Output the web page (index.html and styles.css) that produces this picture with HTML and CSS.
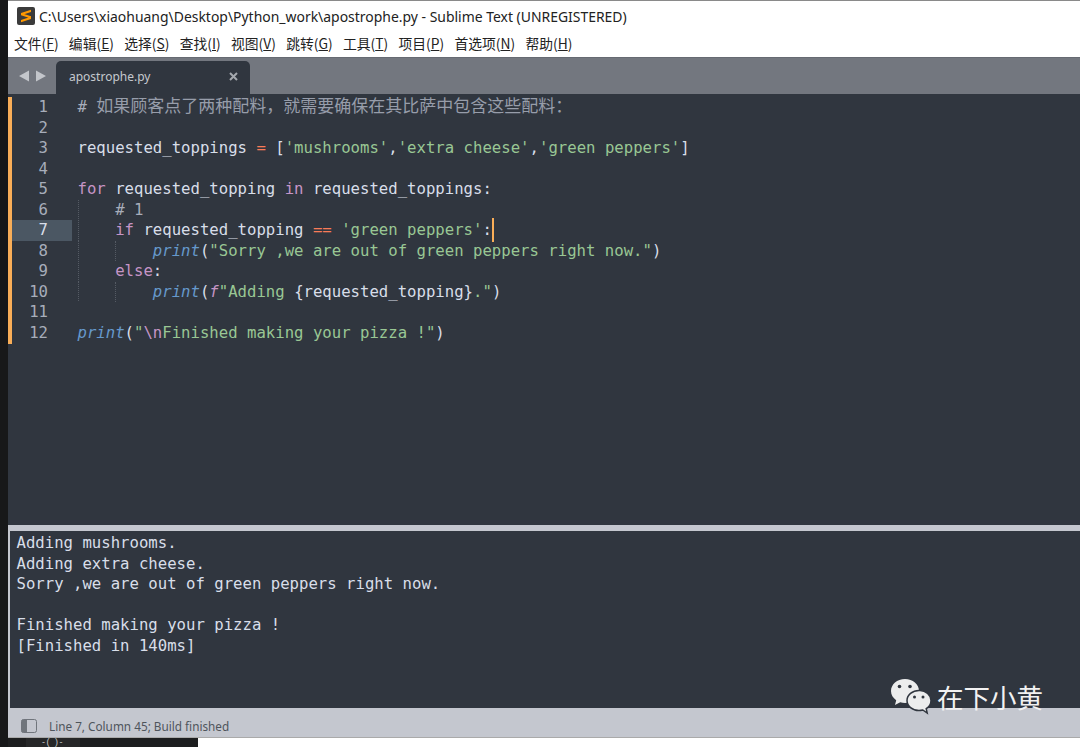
FILE: index.html
```html
<!DOCTYPE html>
<html lang="en">
<head>
<meta charset="utf-8">
<title>apostrophe.py - Sublime Text</title>
<link rel="stylesheet" href="styles.css">
</head>
<body>
<div class="screen">
  <div class="backdrop"></div>
  <div class="column">
  <div class="window">
    <header class="titlebar">
      <svg class="app-icon" width="18" height="18" viewBox="0 0 18 18"><rect width="18" height="18" rx="2" fill="#3b3b3b"/><path d="M4 8.2 14 5V2.8L4 6zM4 8.2l10 3.2V9.2L4 6zM4 15.2l10-3.2V9.8L4 13z" fill="#ff9800"/></svg>
      <span>C:\Users\xiaohuang\Desktop\Python_work\apostrophe.py - Sublime Text (UNREGISTERED)</span>
    </header>
    <nav class="menubar">
      <span>文件(<u>F</u>)</span><span>编辑(<u>E</u>)</span><span>选择(<u>S</u>)</span><span>查找(<u>I</u>)</span><span>视图(<u>V</u>)</span><span>跳转(<u>G</u>)</span><span>工具(<u>T</u>)</span><span>项目(<u>P</u>)</span><span>首选项(<u>N</u>)</span><span>帮助(<u>H</u>)</span>
    </nav>
    <div class="tabbar">
      <div class="tab-nav">
        <svg width="30" height="12" viewBox="0 0 30 12"><path d="M0 6 10 .5v11zM17 .5 27 6 17 11.5z" fill="#c3c6cb"/></svg>
      </div>
      <div class="tab">
        <span>apostrophe.py</span>
        <svg width="9" height="9" viewBox="0 0 9 9"><path d="M1 1l7 7M8 1 1 8" stroke="#a4a8ae" stroke-width="2"/></svg>
      </div>
    </div>
    <main class="editor">
      <div class="line"><span class="num">1</span><span class="code"><span class="cmt"># <span class="cjk">如果顾客点了两种配料，就需要确保在其比萨中包含这些配料：</span></span></span></div>
      <div class="line"><span class="num">2</span><span class="code"></span></div>
      <div class="line"><span class="num">3</span><span class="code">requested_toppings <span class="op">=</span> [<span class="str">'mushrooms'</span>,<span class="str">'extra cheese'</span>,<span class="str">'green peppers'</span>]</span></div>
      <div class="line"><span class="num">4</span><span class="code"></span></div>
      <div class="line"><span class="num">5</span><span class="code"><span class="kw">for</span> requested_topping <span class="kw">in</span> requested_toppings:</span></div>
      <div class="line"><span class="num">6</span><span class="code guide">    <span class="cmt"># 1</span></span></div>
      <div class="line current"><span class="num">7</span><span class="code guide">    <span class="kw">if</span> requested_topping <span class="op">==</span> <span class="str">'green peppers'</span>:<span class="caret"></span></span></div>
      <div class="line"><span class="num">8</span><span class="code guide guide2">        <span class="fn">print</span>(<span class="str">"Sorry ,we are out of green peppers right now."</span>)</span></div>
      <div class="line"><span class="num">9</span><span class="code guide">    <span class="kw">else</span>:</span></div>
      <div class="line"><span class="num">10</span><span class="code guide guide2">        <span class="fn">print</span>(<span class="kw it">f</span><span class="str">"Adding </span>{requested_topping}<span class="str">."</span>)</span></div>
      <div class="line"><span class="num">11</span><span class="code"></span></div>
      <div class="line"><span class="num">12</span><span class="code"><span class="fn">print</span>(<span class="str">"</span><span class="kw">\n</span><span class="str">Finished making your pizza !"</span>)</span></div>
    </main>
    <section class="output">
<pre>Adding mushrooms.
Adding extra cheese.
Sorry ,we are out of green peppers right now.

Finished making your pizza !
[Finished in 140ms]</pre>
    </section>
    <footer class="statusbar">
      <svg width="16" height="14" viewBox="0 0 16 14"><rect x=".5" y=".5" width="15" height="13" rx="2" fill="none" stroke="#70757c"/><path d="M2 .5h4v13H2a1.500 1.500 0 0 1-1.500-1.500V2A1.500 1.500 0 0 1 2 .5z" fill="#70757c"/></svg>
      <span>Line 7, Column 45; Build finished</span>
    </footer>
    <div class="watermark">
      <svg width="42" height="38" viewBox="0 0 42 38"><path d="M15 1C7 1 1 6.500 1 13c0 3.800 2 7 5.200 9.200L5 27l5.200-2.800c1.600.5 3.200.7 4.800.7 7.800 0 14-5.300 14-11.900S22.800 1 15 1z" fill="#eceded"/><path d="M29 12.500c-6.600 0-12 4.500-12 10s5.400 10 12 10c1.300 0 2.600-.2 3.800-.5l4.400 3-1-4.300c3-1.900 4.800-4.800 4.800-8.200 0-5.500-5.400-10-11-10z" fill="#eceded" stroke="#30363f" stroke-width="1.500"/><circle cx="9.500" cy="8.500" r="1.800" fill="#30363f"/><circle cx="20" cy="8.500" r="1.800" fill="#30363f"/><circle cx="24.500" cy="19" r="1.500" fill="#30363f"/><circle cx="33" cy="19" r="1.500" fill="#30363f"/></svg>
      <span>在下小黄</span>
    </div>
  </div>
  <div class="under"><span class="under-tile">-( )-</span></div>
  </div>
</div>
</body>
</html>
```
FILE: styles.css
```css
* { box-sizing: border-box; }
html, body { margin: 0; padding: 0; }
body { width: 1080px; height: 747px; overflow: hidden; background: #fff; font-family: "Noto Sans", "Noto Sans CJK SC", sans-serif; }
.screen { display: flex; width: 1080px; height: 747px; }
.backdrop { width: 8px; flex: none; background: #171819; }
.column { flex: 1; min-width: 0; display: flex; flex-direction: column; }
.window { position: relative; height: 738px; flex: none; display: flex; flex-direction: column; border-top: 1px solid #8a8a8a; }
.under { height: 9px; flex: none; width: 190px; background: #1d1e1f; display: flex; justify-content: flex-start; padding-left: 18px; }
.under-tile { width: 54px; height: 9px; background: #262728; color: #c9c9c9; font-family: "Liberation Sans", sans-serif; font-size: 9px; letter-spacing: 1.500px; line-height: 9px; text-align: center; }

.titlebar { height: 28px; flex: none; background: #fff; display: flex; align-items: center; gap: 4px; padding: 2px 0 0 9px; font-size: 13.950px; color: #222; white-space: nowrap; }
.app-icon { flex: none; }
.menubar { height: 28px; flex: none; background: #fff; display: flex; align-items: center; gap: 10.300px; padding-left: 6px; font-family: "Noto Sans CJK SC", "Noto Sans", sans-serif; font-size: 13.800px; color: #222; white-space: nowrap; }
.tabbar { height: 37px; flex: none; background: #73777f; border-top: 1px solid #666a72; display: flex; align-items: flex-end; }
.tab-nav { width: 48px; height: 36px; display: flex; align-items: center; padding-left: 11px; flex: none; }
.tab { width: 194px; height: 33px; background: #30363f; border-radius: 5px 5px 0 0; display: flex; align-items: center; justify-content: space-between; padding: 0 12px 2px 13px; font-size: 12px; color: #c5c9ce; }

.editor { flex: 1; background: #30363f; padding-top: 3px; font-family: "DejaVu Sans Mono", "Noto Sans CJK SC", monospace; font-size: 15.650px; color: #d8dee9; min-height: 0; }
.line { display: flex; height: 20.550px; line-height: 20.550px; }
.num { width: 64px; flex: none; border-left: 4px solid #f9ae58; padding-right: 24px; text-align: right; color: #a7adba; }
.current .num { background: #4b5763; color: #d8dee9; }
.code { white-space: pre; padding-left: 5.500px; position: relative; }
.guide { background-image: linear-gradient(#555b64 50%, transparent 50%); background-size: 1px 2px; background-repeat: repeat-y; background-position: 6px 0; }
.guide2::before { content: ""; position: absolute; left: 43px; top: 0; bottom: 0; border-left: 1px dotted #555b64; }
.cmt { color: #a7adba; }
.cjk { font-family: "Noto Sans CJK SC", sans-serif; font-size: 17px; line-height: 14px; color: #979daa; }
.kw { color: #c695c6; }
.op { color: #f97b58; }
.str { color: #99c794; }
.fn { color: #6699cc; font-style: italic; }
.it { font-style: italic; }
.caret { position: absolute; right: -2px; top: -2px; width: 2px; height: 24px; background: #f9ae58; }

.output { height: 183px; flex: none; background: #30363f; border-top: 6px solid #c4c7cf; border-left: 2px solid #c4c7cf; padding: 2px 0 0 6.500px; }
.output pre { margin: 0; font-family: "DejaVu Sans Mono", monospace; font-size: 15.650px; line-height: 20.550px; color: #d8dee9; }
.statusbar { height: 30px; flex: none; background: #c4c7cf; border-bottom: 1px solid #aaa; display: flex; align-items: center; gap: 12px; padding: 7px 0 0 13px; font-size: 11.750px; color: #4f555c; }

.watermark { position: absolute; left: 882px; top: 677px; display: flex; align-items: center; gap: 5px; color: #f2f2f2; font-family: "Noto Sans CJK SC", sans-serif; font-size: 26.500px; line-height: 38px; }
```
